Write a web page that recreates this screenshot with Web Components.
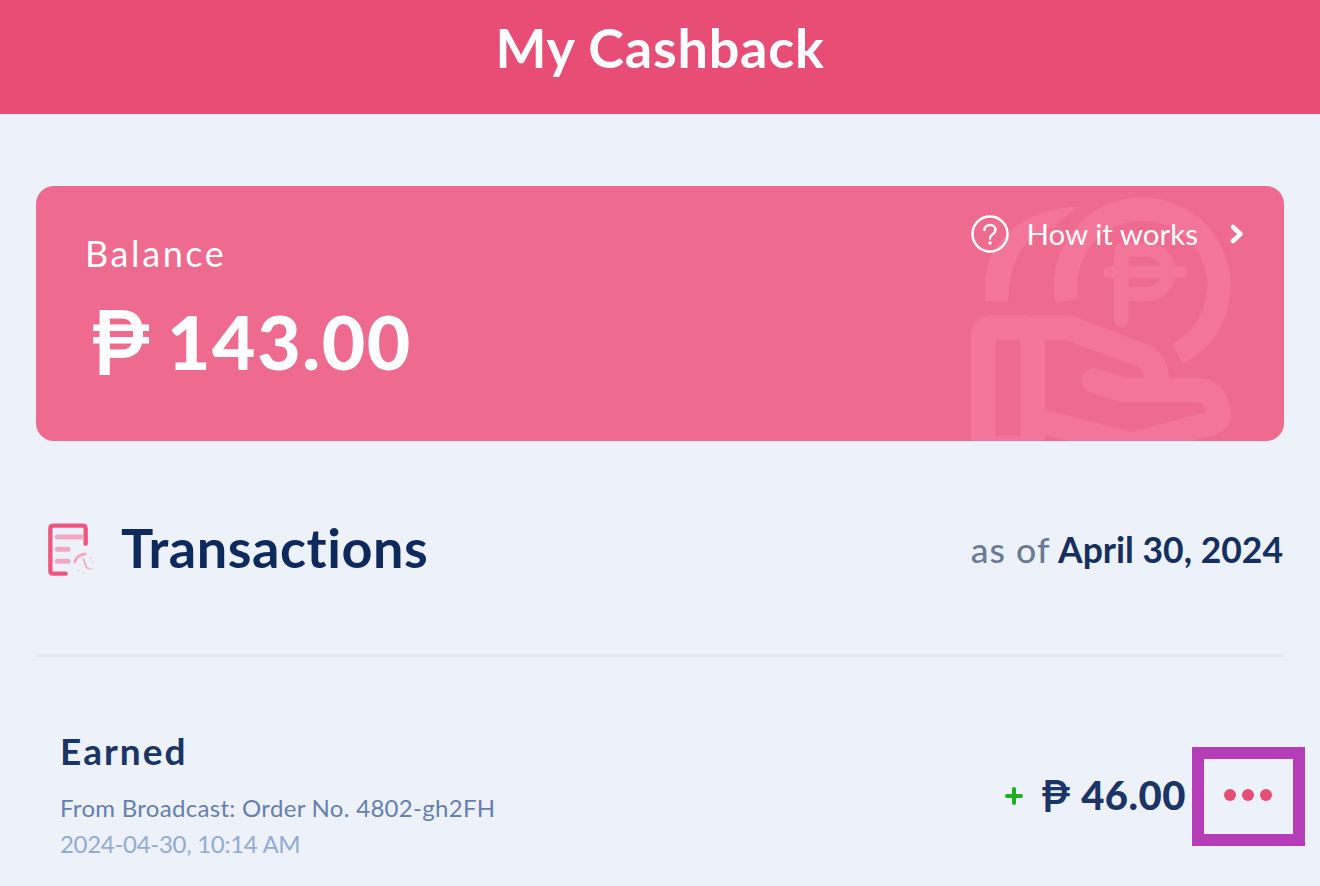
<!DOCTYPE html>
<html lang="en"><head><meta charset="utf-8"><title>My Cashback</title>
<style>
html,body{margin:0;padding:0;background:#edf1fa}
body{font-family:Lato,"Liberation Sans",sans-serif;width:1320px;height:886px;overflow:hidden}
</style></head><body>
<cashback-app></cashback-app>
<script>
const FONT='Lato,"Noto Sans","DejaVu Sans",sans-serif';
function def(name,html){customElements.define(name,class extends HTMLElement{constructor(){super();this.attachShadow({mode:'open'}).innerHTML=html}})}
def('app-header',`<style>:host{display:flex;height:114px;background:#e84e75;align-items:center;justify-content:center;color:#fff;font:700 54px/1 ${FONT};letter-spacing:.75px;padding-bottom:18px;box-sizing:border-box}</style><slot></slot>`);
def('peso-amount',`<style>:host{display:inline-flex;align-items:baseline;gap:var(--gap,.27em)}.p{font-family:Inter,"DejaVu Sans",sans-serif;font-weight:var(--pw,600);font-size:var(--ps,1.1em);display:inline-block;transform:translateY(var(--pd,.05em))}</style><span class="p">₱</span><slot></slot>`);
def('balance-card',`<style>
:host{display:block;position:relative;height:255px;margin:72px 36px 0;background:#ee6a8e;border-radius:18px;overflow:hidden;color:#fff;font-family:${FONT}}
.wm{position:absolute;left:904px;top:0;width:350px;height:255px}
.col{position:relative;display:flex;flex-direction:column;padding:47px 0 0 49px}
.bal{font-size:36px;font-weight:400;line-height:40px;letter-spacing:2.600px}
.amt{font-size:75px;font-weight:900;line-height:80px;margin:25px 0 0 5px;letter-spacing:1.600px;--ps:1.2em;--gap:14px;--pd:.06em;--pw:500}
.how{position:absolute;top:29px;right:40px;display:flex;align-items:center;font-size:29.500px;font-weight:400;line-height:38px;letter-spacing:0}
.how svg{display:block}
.how span{margin:0 32px 0 18px}
</style>
<svg class="wm" viewBox="0 0 1050 765" aria-hidden="true"><g fill="none" stroke="#f4759a" stroke-width="74" stroke-linejoin="round">
<path d="M135 345V300C135 160 260 62 420 62C390 78 365 98 345 125C265 135 205 215 205 345Z" fill="#f4759a" stroke="none"/>
<path d="M381 345A230 230 0 1 1 712 504" stroke-width="70"/>
<path d="M544 191H620A66.500 66.500 0 0 1 620 324H544" stroke-width="42"/>
<path d="M544 192V403" stroke-width="44" stroke-linecap="round"/>
<path d="M508 258H722" stroke-width="37" stroke-linecap="round"/>
<rect x="130" y="425" width="148" height="360" rx="22"/>
<path d="M278 425H370Q385 425 395 429L610 510C640 522 650 550 650 590"/>
<path d="M462 584L530 606Q545 612 560 612H770C815 612 836 650 836 685C836 700 825 708 810 713L575 775L278 700" stroke-linecap="round"/>
</g></svg>
<div class="col"><div class="bal"><slot name="label"></slot></div><div class="amt"><slot name="amount"></slot></div></div>
<div class="how"><svg width="38" height="38" viewBox="0 0 38 38"><circle cx="19" cy="19" r="17.500" fill="none" stroke="#fff" stroke-width="2.500"/><path d="M13.500 15C13.500 12 16 10 19 10S24.500 12 24.500 15C24.500 19 19 19 19 23.500" fill="none" stroke="#fff" stroke-width="2.500" stroke-linecap="round"/><circle cx="19" cy="28" r="1.800" fill="#fff"/></svg><span><slot name="link"></slot></span><svg width="14" height="20" viewBox="0 0 14 20"><path d="M3 3L10.500 10L3 17" fill="none" stroke="#fff" stroke-width="4.500" stroke-linecap="round" stroke-linejoin="round"/></svg></div>`);
def('tx-heading',`<style>
:host{display:flex;align-items:center;justify-content:space-between;margin:66px 37px 0 36px;height:88px;font-family:${FONT}}
.l{display:flex;align-items:center;gap:25px;padding-left:10px}
svg{display:block}
.t{font-size:54px;font-weight:700;color:#0e2a5c;letter-spacing:.55px;line-height:60px;padding-bottom:6px}
.r{font-size:35.500px;font-weight:700;color:#15305f;line-height:44px;padding-bottom:3px}
</style>
<div class="l"><svg width="50" height="58" viewBox="0 0 150 174"><g fill="none" stroke-linecap="round"><path d="M119 65V20Q119 11 110 11H22Q13 11 13 20V146Q13 155 22 155H59" stroke="#ee5680" stroke-width="13"/><path d="M34 45H106M34 82H66M34 118H66" stroke="#efaac2" stroke-width="15"/><path d="M86 120Q91 100 117 96" stroke="#efaac2" stroke-width="9"/><path d="M112 110L121 136L129 140" stroke="#efaac2" stroke-width="5"/><path d="M134 107h.01M141 120h.01M136 140h.01M114 153h.01M97 145h.01" stroke="#efb4ca" stroke-width="5"/></g></svg><div class="t"><slot name="title"></slot></div></div>
<div class="r"><slot name="date"></slot></div>`);
def('tx-row',`<style>
:host{display:flex;justify-content:space-between;align-items:center;margin:44px 15px 0 60px;height:176px;box-sizing:border-box;padding-top:14px;font-family:${FONT}}
.a{display:flex;flex-direction:column}
.h{font-size:37px;font-weight:700;color:#1a3566;line-height:42px;letter-spacing:2px;margin-bottom:18px}
.s{font-size:24px;line-height:36px;color:#6580ad;letter-spacing:.3px}
.d{color:#93abd3;letter-spacing:-.3px}
.b{display:flex;align-items:center}
.plus{margin-right:18px}
.amt{font-size:40px;font-weight:900;color:#1a3566;letter-spacing:.5px;line-height:46px;margin-right:6px;padding-bottom:4px;--ps:1.1em;--gap:10px;--pw:500}
.box{box-sizing:border-box;width:113px;height:99px;padding:0 1px 3px 0;border:12px solid #b53db7;display:flex;align-items:center;justify-content:center;gap:6px}
.box i{display:block;width:12px;height:12px;border-radius:50%;background:#e84e75}
</style>
<div class="a"><div class="h"><slot name="title"></slot></div><div class="s"><slot name="desc"></slot></div><div class="s d"><slot name="date"></slot></div></div>
<div class="b"><svg class="plus" width="18" height="18" viewBox="0 0 18 18"><path d="M9 2V16M2 9H16" stroke="#1fae1f" stroke-width="4" stroke-linecap="round"/></svg><div class="amt"><slot name="amount"></slot></div><div class="box"><i></i><i></i><i></i></div></div>`);
def('cashback-app',`<style>:host{display:block;width:1320px;height:886px;background:#edf1fa;overflow:hidden;color:#0e2a5c}
hr{display:block;border:0;height:3px;background:#e3e8f2;margin:59px 36px 0}
.g{color:#6b7a96;font-weight:500;letter-spacing:1.100px}</style>
<app-header>My Cashback</app-header>
<balance-card><span slot="label">Balance</span><peso-amount slot="amount">143.00</peso-amount><span slot="link">How it works</span></balance-card>
<tx-heading><span slot="title">Transactions</span><span slot="date"><span class="g">as of</span> April 30, 2024</span></tx-heading>
<hr>
<tx-row><span slot="title">Earned</span><span slot="desc">From Broadcast: Order No. 4802-gh2FH</span><span slot="date">2024-04-30, 10:14 AM</span><peso-amount slot="amount">46.00</peso-amount></tx-row>`);
</script></body></html>
